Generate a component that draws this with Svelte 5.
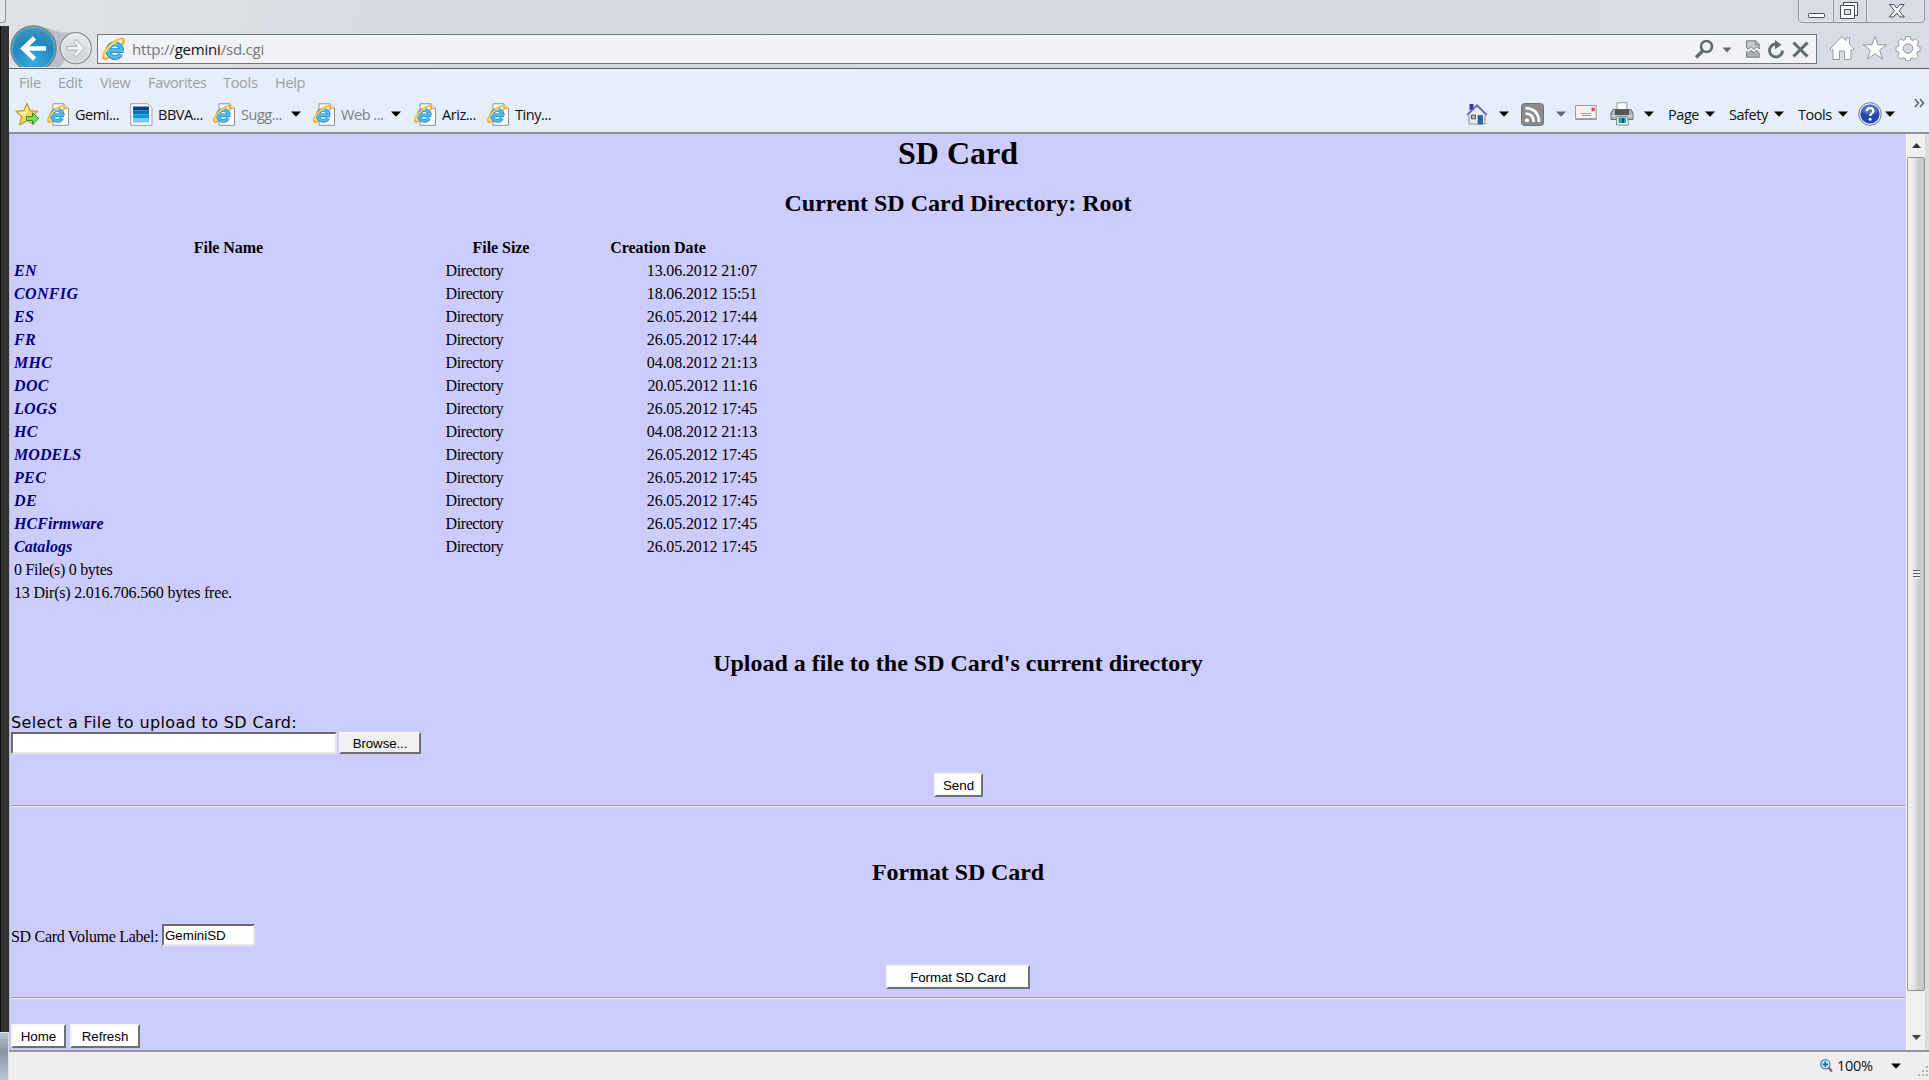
<script lang="ts">
  const menus = [
    { label: 'File', width: 39 },
    { label: 'Edit', width: 42 },
    { label: 'View', width: 48 },
    { label: 'Favorites', width: 75 },
    { label: 'Tools', width: 52 },
    { label: 'Help', width: 40 },
  ];

  const favorites = [
    { label: 'Gemi...', icon: 'ie', width: 83 },
    { label: 'BBVA...', icon: 'bbva', width: 83 },
    { label: 'Sugg...', icon: 'ie', width: 100, dim: true, menu: true },
    { label: 'Web ...', icon: 'ie', width: 101, dim: true, menu: true },
    { label: 'Ariz...', icon: 'ie', width: 73 },
    { label: 'Tiny...', icon: 'ie', width: 70 },
  ];

  const directories = [
    ['EN', '13.06.2012 21:07'],
    ['CONFIG', '18.06.2012 15:51'],
    ['ES', '26.05.2012 17:44'],
    ['FR', '26.05.2012 17:44'],
    ['MHC', '04.08.2012 21:13'],
    ['DOC', '20.05.2012 11:16'],
    ['LOGS', '26.05.2012 17:45'],
    ['HC', '04.08.2012 21:13'],
    ['MODELS', '26.05.2012 17:45'],
    ['PEC', '26.05.2012 17:45'],
    ['DE', '26.05.2012 17:45'],
    ['HCFirmware', '26.05.2012 17:45'],
    ['Catalogs', '26.05.2012 17:45'],
  ];

  let volume = $state('GeminiSD');
</script>

{#snippet caret(color = '#000')}
  <svg class="caret" width="10" height="6" viewBox="0 0 10 6"><path d="M0 .5h10L5 5.800z" fill={color} /></svg>
{/snippet}

{#snippet ieMark()}
  <path d="M15.800 12.300A5.500 5.500 0 1 0 15 15.300M5.500 12.300h11.600" fill="none" stroke="#1f86c8" stroke-width="3.800" />
  <path d="M15.800 12.300A5.500 5.500 0 1 0 15 15.300M5.500 12.300h11.300" fill="none" stroke="#4db9ef" stroke-width="2.600" />
  <path d="M6.200 9.500q2-3.300 5.500-2.800" fill="none" stroke="#a6e0fa" stroke-width="1" />
  <path d="M4.300 18.200c-1.800 1.300-3 1.100-3.200-.1-.5-3.300 3.700-9.200 8.700-12.600 3.700-2.500 7.300-3.200 7.600-1.300.1.700-.2 1.600-.8 2.500" fill="none" stroke="#eeb02a" stroke-width="2" stroke-linecap="round" />
  <path d="M1.500 16.800c.8-3.500 4-7.800 8.500-10.900 3-2 5.500-2.700 6.700-2.200" fill="none" stroke="#ffe680" stroke-width=".9" />
{/snippet}

{#snippet pageIcon()}
  <svg width="23" height="23" viewBox="0 0 23 23">
    <path d="M6 .8h11l4.500 4.500v17H6z" fill="#fbfcfe" stroke="#8b919b" />
    <path d="M17 .8v4.500h4.500" fill="#f8e4d4" stroke="#b08c78" stroke-width=".9" />
    {@render ieMark()}
  </svg>
{/snippet}

{#snippet bbvaIcon()}
  <svg width="23" height="23" viewBox="0 0 23 23">
    <path d="M.7.700h17l4.300 4v17.600H.7z" fill="#fdfdfe" stroke="#9a9fa8" />
    <path d="M3 3.500h16v4H3z" fill="#06407f" /><path d="M3 7.500h16v4H3z" fill="#0873bd" />
    <path d="M3 11.500h16v4H3z" fill="#1199dc" /><path d="M3 15.500h16v4H3z" fill="#6fcbf2" />
  </svg>
{/snippet}

<div class="screen">
  <div class="desktop">
    <div class="tab-corner"></div>
    <div class="backdrop"></div>
    <div class="taskbar"></div>
  </div>

  <div class="window">
    <div class="frame">
      <div class="caption">
        <svg width="130" height="24" viewBox="0 0 130 24">
          <path d="M1.500 0v18q0 4.500 4.500 4.500h117q4.500 0 4.500-4.500V0M36.500 0v22M69.500 0v22" fill="none" stroke="#8d939d" />
          <path d="M2.500 0v18q0 3.500 3.500 3.500h29.500V0M37.500 0v21.500h31V0M70.500 0v21.500h52q4 0 4-4V0" fill="none" stroke="#e9ecf1" stroke-width=".8" />
          <rect x="11.500" y="13.500" width="16" height="4" rx=".8" fill="#fff" stroke="#454b5a" />
          <path d="M46.500 2.500h14v13h-14z" fill="#fff" stroke="#454b5a" />
          <path d="M43.500 5.500h14v13h-14z" fill="#fff" stroke="#454b5a" />
          <path d="M47.500 9.500h6v5h-6z" fill="#dfe3e9" stroke="#454b5a" />
          <path d="M92.500 4.500h4.300l3 3.700 3-3.700h4.300l-5 6.300 5.200 6.200H103l-3.200-3.900-3.200 3.900h-4.300l5.200-6.200z" fill="#fff" stroke="#454b5a" />
        </svg>
      </div>
      <div class="nav">
        <svg class="travel" width="88" height="44" viewBox="0 0 88 44">
          <defs>
            <radialGradient id="back" cx=".5" cy=".8" r=".8"><stop offset="0" stop-color="#36addf" /><stop offset=".6" stop-color="#2089bf" /><stop offset="1" stop-color="#4c97bb" /></radialGradient>
            <linearGradient id="fwd" x2="0" y2="1"><stop offset="0" stop-color="#e8eaed" /><stop offset="1" stop-color="#cdd1d7" /></linearGradient>
            <clipPath id="navclip"><path d="M0 0h88v43H0z" /></clipPath>
          </defs>
          <g clip-path="url(#navclip)">
            <path d="M36 3q12 5 18 5.500h16L52 43H36z" fill="#bcc0c6" />
            <circle cx="24.500" cy="24.500" r="22.500" fill="url(#back)" stroke="#6e8592" stroke-width="1.500" />
            <circle cx="24.500" cy="24.500" r="21.200" fill="none" stroke="#8cc6e0" stroke-opacity=".6" />
            <path d="M25.500 14l-11 10.500 11 10.500M15 24.500h22" fill="none" stroke="#fff" stroke-width="4.600" />
            <circle cx="66.800" cy="24.200" r="15.500" fill="url(#fwd)" stroke="#8e9299" stroke-width="1.300" />
            <circle cx="66.800" cy="24.200" r="14.200" fill="none" stroke="#eff1f3" />
            <path d="M58 22.300h10.500l-4.200-4.200 2.600-2.500 8.700 8.600-8.700 8.600-2.600-2.500 4.200-4.200H58z" fill="#f4f5f7" stroke="#a7abb1" />
          </g>
        </svg>
        <div class="address">
          <svg class="site" width="25" height="25" viewBox="0 1.500 20 20">{@render ieMark()}</svg>
          <span class="url">http://<b>gemini</b>/sd.cgi</span>
          <svg width="20" height="20" viewBox="0 0 20 20"><circle cx="12.500" cy="7.500" r="5.500" fill="none" stroke="#666a70" stroke-width="2.600" /><path d="M8.500 12L2 18.500" stroke="#666a70" stroke-width="3.400" /></svg>
          <svg class="search-caret" width="10" height="6" viewBox="0 0 10 6"><path d="M.5.500h9L5 5.500z" fill="#666a70" /></svg>
          <svg class="compat" width="14" height="18" viewBox="0 0 14 18">
            <path d="M.6 8V.8h8.800l3.800 3.500V9l-2.500-2.500L8 9.500 5 6.500 2.800 9z" fill="#c5c8cc" stroke="#777b81" /><path d="M9.300.8v3.700h4" fill="none" stroke="#777b81" />
            <path d="M.6 11.500v5.700h12.600v-4.500l-2.700-2.400L8 13 5 10.300 2.500 13z" fill="#aeb2b7" stroke="#777b81" />
          </svg>
          <svg class="reload" width="18" height="19" viewBox="0 0 18 19"><path d="M8.500 4A6.500 6.500 0 1 0 15.500 10.500" fill="none" stroke="#666a70" stroke-width="2.900" /><path d="M8 0l6.500 4.800L8 9.300z" fill="#666a70" /></svg>
          <svg class="stop" width="17" height="17" viewBox="0 0 17 17"><path d="M1.500 1.500l14 14M15.500 1.500l-14 14" stroke="#666a70" stroke-width="3.100" /></svg>
        </div>
        <div class="tools">
          <svg width="26" height="26" viewBox="0 0 26 26"><path d="M13 1.500l4 4V3h3.500v6l4.500 5-1.500 1.500-1.500-1V24.500h-6.500V16h-5v8.500H4V14.500l-1.500 1L1 14z" fill="#fff" stroke="#93979e" /></svg>
          <svg width="26" height="26" viewBox="0 0 26 26"><path d="M13 1.500l3 8.300h8.700l-7 5.300 2.600 8.900-7.300-5.300L5.700 24l2.600-8.900-7-5.300H10z" fill="#fff" stroke="#93979e" /></svg>
          <svg width="26" height="26" viewBox="0 0 26 26">
            <path d="M10.800 1.500h4.400l.5 3 2.400 1 2.500-1.800 3.200 3.200-1.800 2.500.8 1.900 2.200.5v4.400l-2.400.5-.8 2.200 1.600 2.400-3.100 3.100-2.500-1.600-2.100.8-.5 2.200h-4.400l-.5-2.300-2.200-.8-2.300 1.600-3.200-3.200 1.600-2.300-.9-2.100-2.300-.5v-4.400l2.300-.4.900-2L2.600 7l3.200-3.200 2.300 1.600 2.200-.9z" fill="#fff" stroke="#93979e" />
            <circle cx="13" cy="13.500" r="4.800" fill="#d5d9df" stroke="#93979e" />
          </svg>
        </div>
      </div>
    </div>

    <div class="bars">
      <div class="menubar">
        {#each menus as m}<span style:width="{m.width}px">{m.label}</span>{/each}
      </div>
      <div class="favbar">
        <svg class="addfav" width="25" height="25" viewBox="0 0 25 25">
          <path d="M12 1.500l3.200 7.200 7.600.7-5.700 5.200 1.900 7.900L12 18.400l-7.300 4.600 1.900-8.300L1 9.400l7.800-.7z" fill="#fbd654" stroke="#c9963c" stroke-width="1.200" stroke-linejoin="round" />
          <path d="M12 3.500L9.600 9.700l-6 .7 4.500 3.500 5-4z" fill="#fff0a8" />
          <path d="M11.500 14.500h6v-3.700l6.300 5.600-6.300 5.600v-3.500h-6z" fill="#7ddb55" stroke="#2f8e28" />
        </svg>
        <div class="favs">
          {#each favorites as f}
            <div class="fav" class:dim={f.dim} style:width="{f.width}px">
              {#if f.icon === 'ie'}{@render pageIcon()}{:else}{@render bbvaIcon()}{/if}
              <span>{f.label}</span>
              {#if f.menu}{@render caret()}{/if}
            </div>
          {/each}
        </div>
        <div class="commands">
          <div class="cmd home">
            <svg width="22" height="22" viewBox="0 0 22 22">
              <path d="M3.500 1h4v6h-4z" fill="#3437b5" />
              <path d="M3 11l8-8 8 8v10H3z" fill="#e9ebef" stroke="#8a8d9c" /><path d="M1 12L11 2l10 10" fill="none" stroke="#5b61ae" stroke-width="1.500" /><path d="M1.500 13.200L11 4l9.500 9.200" fill="none" stroke="#c3c8e4" />
              <path d="M12 12.500h4.500V21H12z" fill="#2464ac" stroke="#174a86" stroke-width=".6" /><path d="M5.500 12h4v3.800h-4z" fill="#b3b6bf" stroke="#555965" />
            </svg>{@render caret()}
          </div>
          <div class="cmd feed">
            <svg width="23" height="23" viewBox="0 0 23 23">
              <rect x=".5" y=".5" width="22" height="22" rx="3" fill="#8c8c8c" stroke="#717171" /><circle cx="6" cy="17.300" r="2" fill="#fff" />
              <path d="M4.500 10.500q8 .2 8.200 8.500M4.500 5.200q13 .5 13.500 13.800" fill="none" stroke="#fff" stroke-width="2.700" />
            </svg>{@render caret('#62687a')}
          </div>
          <div class="cmd mail">
            <svg width="22" height="15" viewBox="0 0 22 15"><path d="M.5.500h20.700v13.700H.5z" fill="#f2f2f3" stroke="#9a9ca1" /><path d="M1 14h20.500" stroke="#77797d" /><path d="M16.500 2.500h3.300v3.800h-3.300z" fill="#d44f5f" /><path d="M6 8.500h10M7 10.500h9" stroke="#9b9da2" /></svg>
          </div>
          <div class="cmd print">
            <svg width="24" height="24" viewBox="0 0 24 24">
              <path d="M7 .7h10v9H7z" fill="#fcfdfe" stroke="#999da5" /><path d="M3 7.500h18l2 3.500v6.500H1V11z" fill="#aeb2b4" stroke="#696d72" /><path d="M5 7.500h14v6H5z" fill="#525459" /><path d="M1.500 14h21" stroke="#d9dcdd" stroke-width="1.500" />
              <path d="M6.500 14.500h11l1 8.500h-12z" fill="#effafa" stroke="#7d8b90" /><path d="M8.500 15.500h7.500v5.500H8.500z" fill="#22a3a4" /><path d="M13 16v5" stroke="#0b5e75" stroke-width="2" />
            </svg>{@render caret()}
          </div>
          <div class="cmd page"><span>Page</span>{@render caret()}</div>
          <div class="cmd safety"><span>Safety</span>{@render caret()}</div>
          <div class="cmd toolmenu"><span>Tools</span>{@render caret()}</div>
          <div class="cmd help">
            <svg width="24" height="24" viewBox="0 0 24 24">
              <circle cx="12" cy="12" r="11.300" fill="#e8ecf6" stroke="#71798f" /><circle cx="12" cy="12" r="9.600" fill="#2146b2" /><path d="M3.500 10a8.600 8.600 0 0 1 17 0q-8 4-17 0z" fill="#6a89d8" opacity=".6" />
              <path d="M8.700 9.300q.2-3.100 3.400-3.100 3.300 0 3.300 2.700 0 1.700-1.700 2.700-1.500.9-1.500 2.500" fill="none" stroke="#fff" stroke-width="2.300" /><circle cx="12.100" cy="17.200" r="1.500" fill="#fff" />
            </svg>{@render caret()}
          </div>
          <svg class="more" width="11" height="10" viewBox="0 0 11 10"><path d="M1 1l3.500 4L1 9M6 1l3.500 4L6 9" fill="none" stroke="#53567e" stroke-width="1.400" /></svg>
        </div>
      </div>
    </div>

    <div class="viewport">
      <main>
        <h1>SD Card</h1>
        <h2 class="current">Current SD Card Directory: Root</h2>
        <div class="listing">
          <div class="row head"><span>File Name</span><span>File Size</span><span>Creation Date</span></div>
          {#each directories as [name, date]}
            <div class="row"><a href="#{name}" class:long={name.length > 5 && name !== 'CONFIG'}>{name}</a><span class="size">Directory</span><span class="date">{date}</span></div>
          {/each}
          <div class="row total files">0 File(s) 0 bytes</div>
          <div class="row total">13 Dir(s) 2.016.706.560 bytes free.</div>
        </div>

        <h2 class="upload">Upload a file to the SD Card's current directory</h2>
        <div class="prompt">Select a File to upload to SD Card:</div>
        <div class="picker"><input class="path" aria-label="File" /><button class="browse">Browse...</button></div>
        <button class="send">Send</button>
        <div class="rule"></div>

        <h2 class="format">Format SD Card</h2>
        <div class="volume"><label for="vol">SD Card Volume Label:</label><input id="vol" bind:value={volume} /></div>
        <button class="formatbtn">Format SD Card</button>
        <div class="rule"></div>
        <div class="footer"><button class="homebtn">Home</button><button class="refresh">Refresh</button></div>
      </main>
      <div class="scrollbar">
        <svg class="arrow" width="9" height="5" viewBox="0 0 9 5"><path d="M0 5L4.500 0 9 5z" fill="#333" /></svg>
        <div class="thumb"><div class="grip"></div></div>
        <svg class="arrow" width="9" height="5" viewBox="0 0 9 5"><path d="M0 0l4.500 5L9 0z" fill="#444" /></svg>
      </div>
    </div>

    <div class="status">
      <svg class="zoomicon" width="13" height="14" viewBox="0 0 13 14"><path d="M8 8l4 4.500" stroke="#8b6a52" stroke-width="2.500" /><circle cx="5.300" cy="5.300" r="4.600" fill="#d9effc" stroke="#3c82bd" stroke-width="1.200" /><path d="M5.300 2.500v5.600M2.500 5.300h5.600" stroke="#1668b5" stroke-width="1.800" /></svg>
      <span>100%</span>
      {@render caret()}
      <svg class="resize" width="12" height="12" viewBox="0 0 12 12"><path d="M9 1h2v2H9zM5 5h2v2H5zM9 5h2v2H9zM1 9h2v2H1zM5 9h2v2H5zM9 9h2v2H9z" fill="#b2b0b0" /></svg>
    </div>
  </div>
</div>

<style>
  :global(body) { margin: 0; overflow: hidden; }
  * { box-sizing: border-box; }
  svg { display: block; flex: none; }
  .screen { display: flex; width: 1929px; height: 1080px; overflow: hidden; background: #d8dce3; }
  .desktop { flex: none; width: 9px; display: flex; flex-direction: column; background: #dcdfe4; }
  .tab-corner { width: 6px; height: 23px; border: solid #8d9199; border-width: 0 1px 1px 0; border-radius: 0 0 4px 0; background: #e3e5e9; margin-bottom: 3px; }
  .backdrop { height: 1006px; background: #343231; border-left: 1px solid #0c0c0c; }
  .taskbar { flex: 1; background: linear-gradient(#b8c3cd, #8594a1 40%, #b9c8d4); border: solid #dde3e8; border-width: 1px 1px 0 0; }

  .window { flex: none; width: 1920px; display: flex; flex-direction: column; font: 14.5px/24px 'Open Sans', 'Noto Sans', sans-serif; letter-spacing: -.45px; }
  .frame { height: 68px; background: linear-gradient(100deg, #dee1e5 0, #dcdfe4 10%, #d4d9e1 24%, #d6dae2 70%, #d9dde3 100%); }
  .caption { height: 24px; display: flex; justify-content: flex-end; padding-right: 3px; }
  .caption svg { margin-right: -1px; }
  .nav { height: 44px; display: flex; }
  .address { width: 1720px; height: 30px; margin-top: 10px; display: flex; align-items: center; border: 1px solid #72757b; background: #f1f2f5; padding-left: 4px; padding-right: 7px; }
  .site { margin-right: 5px; }
  .url { flex: 1; font-size: 15px; letter-spacing: -.2px; color: #74767a; white-space: nowrap; }
  .url b { font-weight: 400; color: #111; }
  .search-caret { margin: 2px 14px 0 8px; }
  .compat { margin-right: 7px; }
  .reload { margin-right: 7px; }
  .tools { display: flex; gap: 7px; padding: 11px 0 0 12px; }

  .bars { height: 66px; border-top: 1px solid #5f646c; border-bottom: 2px solid #8d9297; background: #e6eefa; }
  .menubar { height: 27px; padding: 2px 0 0 10px; display: flex; color: #9b9fa5; letter-spacing: -.3px; }
  .favbar { display: flex; height: 36px; padding-left: 6px; }
  .addfav { margin: 6px 7px 0 0; }
  .favs { display: flex; flex: 1; }
  .fav { display: flex; align-items: center; height: 36px; flex: none; }
  .fav span { width: 49px; margin: 2px 0 0 5px; color: #111; white-space: nowrap; }
  .fav.dim span { width: 50px; color: #7b7e83; }
  .commands { display: flex; width: 463px; height: 36px; }
  .cmd { display: flex; align-items: center; color: #111; flex: none; }
  .cmd span { margin-top: 2px; }
  .home { width: 55px; gap: 11px; }
  .feed { width: 54px; gap: 12px; }
  .mail { width: 35px; }
  .mail svg { margin-top: -3px; }
  .print { width: 58px; gap: 10px; }
  .page { width: 61px; }
  .page span { width: 37px; }
  .safety { width: 69px; }
  .safety span { width: 45px; }
  .toolmenu { width: 60px; }
  .toolmenu span { width: 40px; }
  .help { width: 57px; gap: 3px; }
  .more { margin-top: 2px; margin-left: -1px; }

  .viewport { height: 916px; display: flex; border-left: 1px solid #b9b9c6; }
  main { width: 1896px; padding: 1px 0 0 1px; background: #ccccff; font-family: 'Liberation Serif', serif; font-size: 16px; letter-spacing: 0; color: #000; overflow: hidden; }
  h1, h2 { text-align: center; font-weight: 700; margin: 0 1px 0 0; }
  h1 { font-size: 32px; line-height: 37px; }
  h2 { font-size: 24px; line-height: 28px; }
  .current { margin-top: 17px; }
  .listing { margin: 19px 0 0 3px; }
  .row { display: grid; grid-template-columns: 429px 112px 198px; column-gap: 2px; height: 23px; line-height: 23px; }
  .head { font-weight: 700; text-align: center; letter-spacing: -.05px; }
  .row a { color: #000080; font-weight: 700; font-style: italic; text-decoration: none; letter-spacing: .35px; }
  .row a.long { letter-spacing: .08px; }
  .size { letter-spacing: -.4px; padding-left: .5px; }
  .date { text-align: right; letter-spacing: -.14px; }
  .total { display: block; letter-spacing: -.2px; }
  .files { letter-spacing: -.3px; }
  .upload { margin-top: 45px; }
  .prompt { margin-top: 36px; height: 19px; line-height: 19px; font-family: 'DejaVu Sans', sans-serif; letter-spacing: .36px; }
  .picker { display: flex; gap: 2px; }
  button, input { font: 13.333px 'Liberation Sans', sans-serif; color: #000; border: 2px solid; margin: 0; padding: 0; border-radius: 0; outline: 0; }
  input { background: #fff; border-color: #6b6b6b #e6e6e6 #e6e6e6 #6b6b6b; }
  button { background: #fff; border-color: #f6f6fa #707070 #707070 #f6f6fa; display: block; white-space: nowrap; }
  .path { width: 326px; height: 22px; }
  .browse { width: 82px; height: 22px; background: #f0f0f0; letter-spacing: -.1px; }
  .send { width: 49px; height: 24px; margin: 19px 0 8px 923px; }
  .rule { height: 2px; border-top: 1px solid #9a9aae; border-bottom: 1px solid #f2f2fc; margin-right: 1px; }
  .format { margin-top: 51px; letter-spacing: -.1px; }
  .volume { display: flex; margin-top: 38px; height: 22px; gap: 4px; }
  .volume label { width: 147px; line-height: 25px; letter-spacing: -.3px; white-space: nowrap; }
  .volume input { width: 93px; height: 22px; padding-left: 1px; }
  .formatbtn { width: 144px; height: 24px; margin: 19px 0 8px 875px; letter-spacing: -.1px; }
  .footer { display: flex; gap: 4px; margin-top: 25px; }
  .homebtn { width: 55px; height: 24px; }
  .refresh { width: 70px; height: 24px; }

  .scrollbar { width: 23px; display: flex; flex-direction: column; align-items: center; background: #f0f0f0; border-right: 4px solid #dcdcdc; border-left: 1px solid #fafafc; }
  .scrollbar .arrow:first-child { margin: 9px 0 9px; }
  .thumb { width: 18px; height: 834px; border: 1px solid #8f9196; border-radius: 2px; background: linear-gradient(90deg, #f5f5f5, #e5e5e8 40%, #cfcfd2 60%, #c5c5c8); display: flex; align-items: center; justify-content: center; }
  .grip { width: 7px; height: 9px; background: repeating-linear-gradient(#606060 0 1px, #eee 1px 3px); }
  .scrollbar .arrow:last-child { margin-top: 44px; }

  .status { height: 30px; border-top: 2px solid #96969c; background: #f0eded; display: flex; align-items: center; color: #111; padding-left: 1811px; }
  .status span { width: 59px; margin-left: 4px; letter-spacing: -.3px; }
  .resize { margin: 10px 0 0 16px; }
</style>
